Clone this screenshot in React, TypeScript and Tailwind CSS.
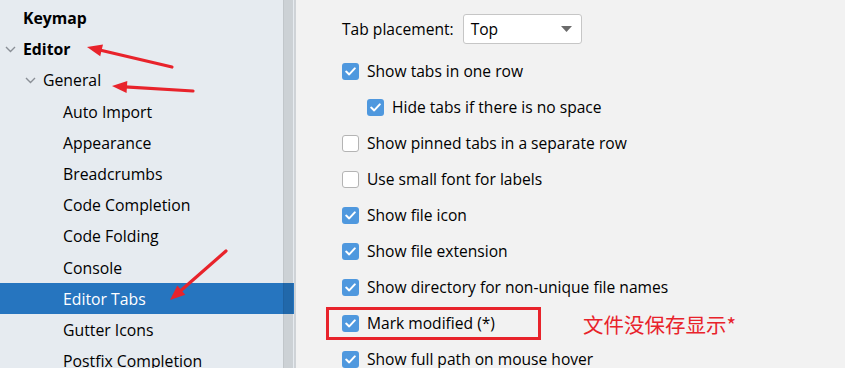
import React from "react";

const font = { fontFamily: '"Open Sans", "Noto Sans CJK SC", sans-serif' };

function Chevron() {
  return (
    <svg width="11" height="7" viewBox="0 0 11 7" className="shrink-0">
      <path d="M1 1 L5.5 5.5 L10 1" fill="none" stroke="#8a8f96" strokeWidth="1.4" />
    </svg>
  );
}

type Item = { label: string; level: number; bold?: boolean; chevron?: boolean; selected?: boolean };

const items: Item[] = [
  { label: "Keymap", level: 0, bold: true },
  { label: "Editor", level: 0, bold: true, chevron: true },
  { label: "General", level: 1, chevron: true },
  { label: "Auto Import", level: 2 },
  { label: "Appearance", level: 2 },
  { label: "Breadcrumbs", level: 2 },
  { label: "Code Completion", level: 2 },
  { label: "Code Folding", level: 2 },
  { label: "Console", level: 2 },
  { label: "Editor Tabs", level: 2, selected: true },
  { label: "Gutter Icons", level: 2 },
  { label: "Postfix Completion", level: 2 },
];

function SidebarRow({ item }: { item: Item }) {
  const pad = item.level === 0 ? "pl-[5px]" : item.level === 1 ? "pl-[25px]" : "pl-[63px]";
  return (
    <div
      className={`h-[31.2px] shrink-0 flex items-center ${pad} ${
        item.selected ? "bg-[#2675bf] text-white" : "text-black"
      }`}
    >
      {item.level < 2 && (
        <span className="w-[18px] flex items-center">{item.chevron ? <Chevron /> : null}</span>
      )}
      <span className={`pt-[2px] text-[15.8px] leading-none whitespace-nowrap ${item.bold ? "font-bold" : ""}`}>{item.label}</span>
    </div>
  );
}

function CheckBox({ checked }: { checked: boolean }) {
  return checked ? (
    <span className="w-[17px] h-[17px] rounded-[3px] bg-[#4f98de] flex items-center justify-center shrink-0">
      <svg width="11" height="9" viewBox="0 0 11 9">
        <path d="M1.2 4.6 L4.2 7.4 L9.8 1.4" fill="none" stroke="white" strokeWidth="2" strokeLinecap="round" strokeLinejoin="round" />
      </svg>
    </span>
  ) : (
    <span className="w-[17px] h-[17px] rounded-[3px] bg-white border border-[#b4b4b4] shrink-0" />
  );
}

const opts: { label: string; checked: boolean; indent?: boolean }[] = [
  { label: "Show tabs in one row", checked: true },
  { label: "Hide tabs if there is no space", checked: true, indent: true },
  { label: "Show pinned tabs in a separate row", checked: false },
  { label: "Use small font for labels", checked: false },
  { label: "Show file icon", checked: true },
  { label: "Show file extension", checked: true },
  { label: "Show directory for non-unique file names", checked: true },
  { label: "Mark modified (*)", checked: true },
  { label: "Show full path on mouse hover", checked: true },
];

function Arrow({ x1, y1, x2, y2 }: { x1: number; y1: number; x2: number; y2: number }) {
  const dx = x2 - x1;
  const dy = y2 - y1;
  const len = Math.hypot(dx, dy);
  const ux = dx / len;
  const uy = dy / len;
  const hl = 15;
  const hw = 6;
  const bx = x2 - ux * hl;
  const by = y2 - uy * hl;
  const px = -uy;
  const py = ux;
  const pts = `${x2},${y2} ${bx + px * hw},${by + py * hw} ${bx - px * hw},${by - py * hw}`;
  return (
    <g>
      <line x1={x1} y1={y1} x2={bx + ux * 2} y2={by + uy * 2} stroke="#e8232b" strokeWidth="3.2" strokeLinecap="round" />
      <polygon points={pts} fill="#e8232b" />
    </g>
  );
}

export default function App() {
  return (
    <div className="relative w-[845px] h-[368px] overflow-hidden flex bg-[#f2f2f2]" style={font}>
      {/* Sidebar */}
      <div className="relative w-[294px] h-full bg-[#e6ebf0] flex flex-col pt-[2.4px] shrink-0">
        {items.map((it) => (
          <SidebarRow key={it.label} item={it} />
        ))}
        <div className="absolute top-0 bottom-0 left-[283px] w-[10px] bg-black/[0.11] border-l border-black/[0.05]" />
      </div>
      <div className="w-[2px] h-full bg-[#cfd3d7] shrink-0" />

      {/* Content */}
      <div className="flex-1 flex flex-col pt-[14px] pl-[46px] text-black">
        <div className="h-[30px] flex items-center">
          <span className="pt-[2px] text-[15.6px] leading-none">Tab placement:</span>
          <div className="ml-[9px] w-[119px] h-[30px] bg-white border border-[#c6c6c6] rounded-[3px] flex items-center pl-[7px] pr-[9px] justify-between">
            <span className="pt-[2px] text-[15.6px] leading-none">Top</span>
            <svg width="11" height="6" viewBox="0 0 11 6">
              <path d="M0 0 L11 0 L5.5 6 Z" fill="#6b6b6b" />
            </svg>
          </div>
        </div>
        <div className="mt-[9px] flex flex-col">
          {opts.map((o) => (
            <div key={o.label} className={`h-[36px] flex items-center ${o.indent ? "pl-[25px]" : ""}`}>
              <CheckBox checked={o.checked} />
              <span className="ml-[8px] pt-[2px] text-[15.6px] leading-none whitespace-nowrap">{o.label}</span>
              {o.label === "Mark modified (*)" && (
                <span className="ml-[88px] pt-[2px] text-[20.5px] leading-none text-[#e8232b] whitespace-nowrap" style={{ fontFamily: '"Noto Sans CJK SC", sans-serif' }}>
                  文件没保存显示*
                </span>
              )}
            </div>
          ))}
        </div>
      </div>

      {/* Annotation overlays */}
      <div className="absolute left-[326px] top-[307px] w-[215px] h-[33px] border-[3px] border-[#e8232b]" />
      <svg className="absolute left-0 top-0 pointer-events-none" width="845" height="368">
        <Arrow x1={172} y1={67} x2={87} y2={47} />
        <Arrow x1={193} y1={91} x2={112} y2={86} />
        <Arrow x1={226} y1={251} x2={170} y2={300} />
      </svg>
    </div>
  );
}
